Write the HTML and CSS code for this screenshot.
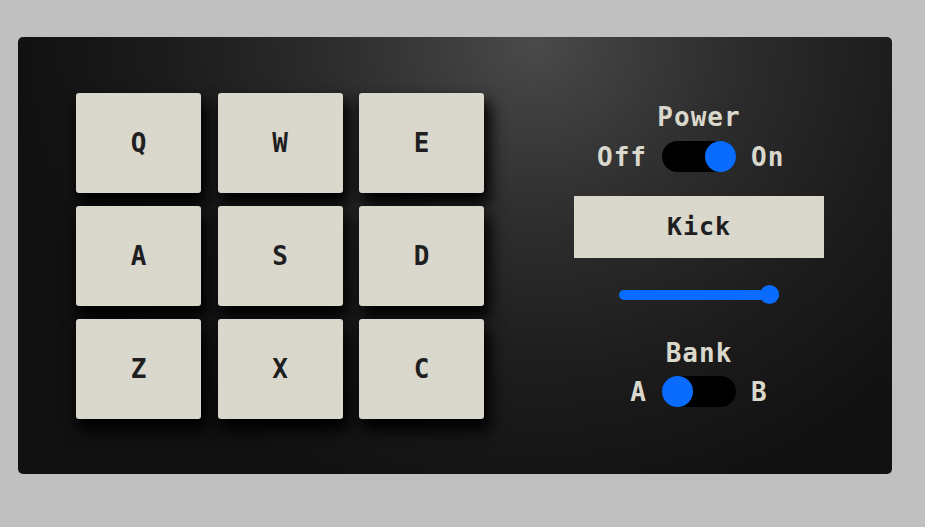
FILE: index.html
```html
<!DOCTYPE html>
<html lang="en">
<head>
<meta charset="utf-8">
<title>Drum Machine</title>
<link rel="stylesheet" href="styles.css">
</head>
<body>
<div class="machine">
  <div class="pads">
    <button class="pad">Q</button>
    <button class="pad">W</button>
    <button class="pad">E</button>
    <button class="pad">A</button>
    <button class="pad">S</button>
    <button class="pad">D</button>
    <button class="pad">Z</button>
    <button class="pad">X</button>
    <button class="pad">C</button>
  </div>
  <div class="controls">
    <div class="label power-label">Power</div>
    <div class="switch-row">
      <span class="side left">Off</span>
      <span class="switch on"><span class="knob"></span></span>
      <span class="side right">On</span>
    </div>
    <div class="display">Kick</div>
    <input class="volume" type="range" min="0" max="1" step="0.01" value="1">
    <div class="label bank-label">Bank</div>
    <div class="switch-row">
      <span class="side left">A</span>
      <span class="switch"><span class="knob"></span></span>
      <span class="side right">B</span>
    </div>
  </div>
</div>
</body>
</html>
```
FILE: styles.css
```css
* { box-sizing: border-box; }

body {
  margin: 0;
  background: #c0c0c0;
  font-family: "DejaVu Sans Mono", "Liberation Mono", monospace;
  font-weight: bold;
}

.machine {
  margin: 37px 0 0 18px;
  width: 874px;
  height: 437px;
  border-radius: 5px;
  background: radial-gradient(ellipse 520px 480px at 59% 1%, #4b4949 0%, #2c2c2c 40%, #1c1c1c 70%, #111111 100%);
  padding: 56px 68px 56px 58px;
  display: flex;
  align-items: center;
  gap: 90px;
}

.pads {
  display: grid;
  grid-template-columns: repeat(3, 125px);
  grid-auto-rows: 100px;
  column-gap: 16.5px;
  row-gap: 13px;
}

.pad {
  border: none;
  border-radius: 3px;
  background: #dad8cc;
  color: #1f1f22;
  font-family: inherit;
  font-weight: bold;
  font-size: 26px;
  box-shadow: 4px 10px 16px 2px #000;
  padding: 0;
}

.controls {
  width: 250px;
  display: flex;
  flex-direction: column;
  align-items: center;
  color: #dad8cc;
  font-size: 26px;
  line-height: 30px;
  letter-spacing: 1px;
  margin-bottom: 2px;
}

.label { height: 30px; }

.switch-row {
  display: grid;
  grid-template-columns: 1fr auto 1fr;
  align-items: center;
  column-gap: 15px;
  width: 100%;
  margin-top: 9px;
}

.bank-label + .switch-row { margin-top: 8px; }

.side.left { justify-self: end; }
.side.right { justify-self: start; }

.switch {
  width: 74px;
  height: 31px;
  border-radius: 16px;
  background: #000;
  display: flex;
  justify-content: flex-start;
}

.switch.on { justify-content: flex-end; }

.knob {
  width: 31px;
  height: 31px;
  border-radius: 50%;
  background: #0a6cff;
}

.display {
  width: 250px;
  height: 62px;
  margin-top: 24px;
  background: #dad8cc;
  color: #1f1f22;
  display: flex;
  align-items: center;
  justify-content: center;
  font-size: 25px;
}

.volume {
  -webkit-appearance: none;
  appearance: none;
  width: 160px;
  height: 19px;
  margin: 27px 0 0 0;
  background: transparent;
}

.volume::-webkit-slider-runnable-track {
  height: 10px;
  border-radius: 5px;
  background: #0a6cff;
}

.volume::-webkit-slider-thumb {
  -webkit-appearance: none;
  appearance: none;
  width: 19px;
  height: 19px;
  border-radius: 50%;
  background: #0a6cff;
  margin-top: -4.5px;
}

.bank-label { margin-top: 34px; }
```
